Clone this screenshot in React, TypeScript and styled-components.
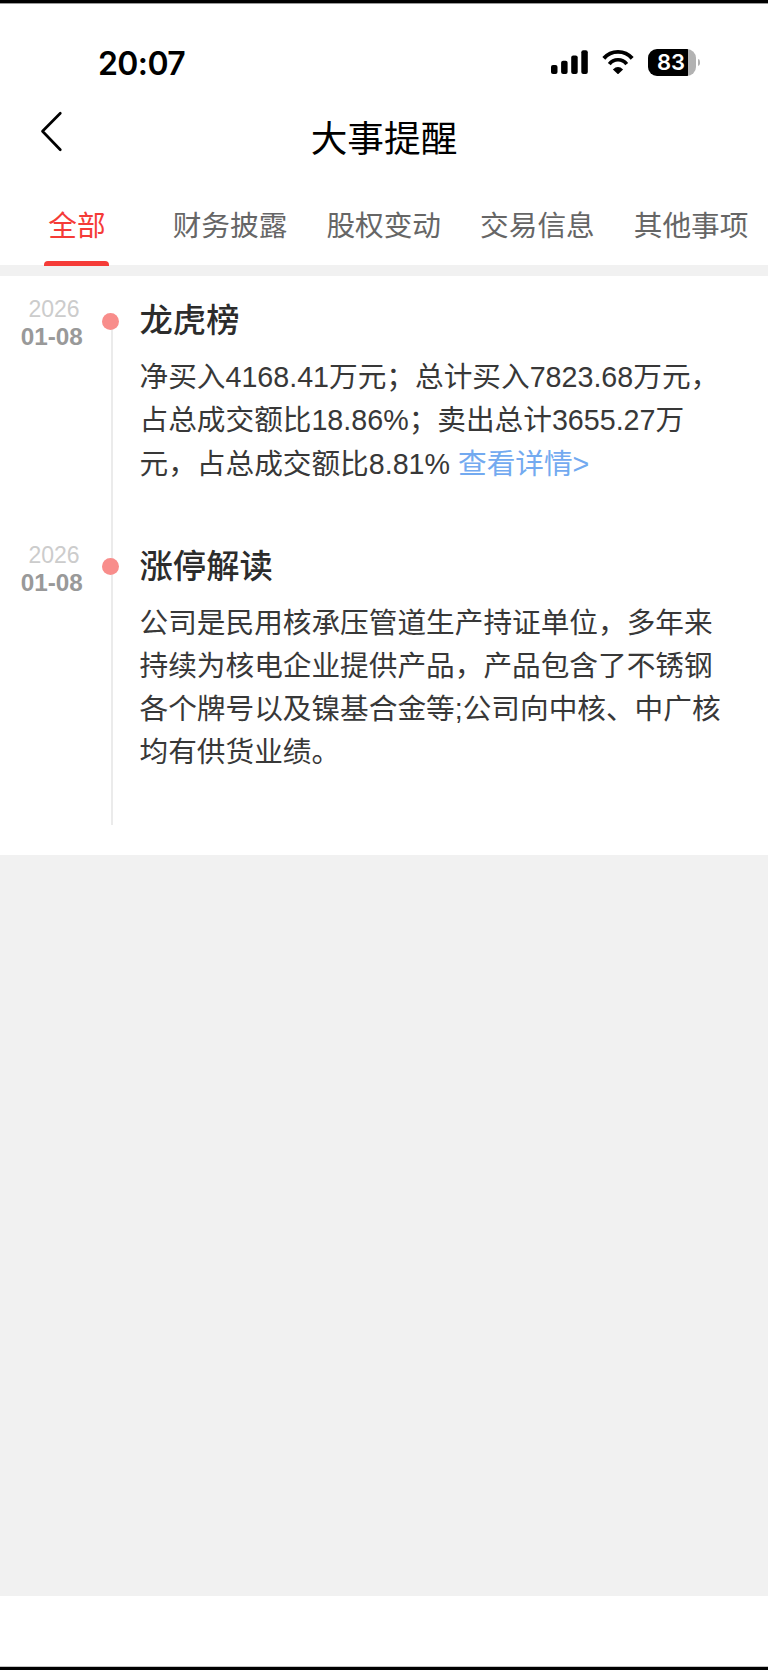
import React from "react";
import styled, { createGlobalStyle } from "styled-components";

const GlobalStyle = createGlobalStyle`
  * { box-sizing: border-box; }
  html, body { margin: 0; padding: 0; background: #fff; }
  body { font-family: "Liberation Sans", "Noto Sans CJK SC", sans-serif; }
  h1, h2, p { margin: 0; font-weight: 400; }
`;

const Screen = styled.div`
  width: 768px;
  height: 1670px;
  display: flex;
  flex-direction: column;
  background: #fff;
  border-top: 3px solid #000;
  border-bottom: 3px solid #000;
  box-shadow: inset 0 1px 0 #9a9a9a, inset 0 -1px 0 #c4c4c4;
  overflow: hidden;
`;

const StatusBar = styled.div`
  height: 93px;
  padding: 41px 68px 0 98px;
  display: flex;
  justify-content: space-between;
  align-items: flex-start;
`;

const Clock = styled.span`
  font: 600 32px/38px Inter, sans-serif;
  color: #000;
  letter-spacing: -0.6px;
  padding-top: 0.5px;
`;

const Indicators = styled.div`
  display: flex;
  align-items: flex-start;
  padding-top: 5px;
`;

const SignalIcon = styled.svg`
  width: 37px;
  height: 27px;
  margin-right: 14px;
`;

const WifiIcon = styled.svg`
  width: 32px;
  height: 27px;
  margin-right: 14px;
`;

const Battery = styled.div`
  display: flex;
  align-items: center;
  height: 27px;
`;

const BatteryBody = styled.div`
  width: 48px;
  height: 27px;
  border-radius: 9px;
  background: linear-gradient(to right, #000 39.7px, #b2b2b2 39.7px);
  color: #fff;
  font: 600 22px/27px Inter, sans-serif;
  padding-left: 9px;
  white-space: nowrap;
`;

const BatteryTip = styled.div`
  width: 2.5px;
  height: 7px;
  margin: 0 0 0 1.5px;
  border-radius: 0 3px 3px 0 / 0 4px 4px 0;
  background: #b2b2b2;
`;

const NavBar = styled.header`
  height: 92px;
  display: grid;
  grid-template-columns: 120px 1fr 120px;
  align-items: start;
`;

const BackButton = styled.button`
  border: 0;
  background: none;
  padding: 14px 0 0 39px;
  text-align: left;
  line-height: 0;
`;

const Title = styled.h1`
  text-align: center;
  font-size: 36.67px;
  line-height: 44px;
  padding-top: 22px;
  color: #000;
`;

const Tabs = styled.nav`
  height: 77px;
  flex: none;
  display: flex;
  padding-left: 44.7px;
`;

const Tab = styled.div<{ $active?: boolean }>`
  flex: none;
  display: flex;
  flex-direction: column;
  justify-content: space-between;
  align-items: center;
  width: ${(p) => (p.$active ? "64.6px" : "114.7px")};
  margin-right: ${(p) => (p.$active ? "63.4px" : "39px")};
  padding-top: 16.5px;
  font-size: 28.67px;
  line-height: 43px;
  white-space: nowrap;
  color: ${(p) => (p.$active ? "#f53b37" : "#666")};
`;

const TabUnderline = styled.span`
  position: relative;
  width: 65px;
  height: 5px;
  margin-bottom: -1px;
  border-radius: 4px 4px 0 0;
  background: #f53b37;
`;

const Divider = styled.div`
  height: 11px;
  flex: none;
  background: #f1f1f1;
`;

const Timeline = styled.main`
  height: 579px;
  flex: none;
  padding-top: 21px;
`;

const Event = styled.article<{ $height: number }>`
  display: grid;
  grid-template-columns: 102px 37.5px 1fr;
  height: ${(p) => p.$height}px;
`;

const EventDate = styled.div`
  display: flex;
  flex-direction: column;
  margin-top: -1px;
`;

const Year = styled.span`
  padding-left: 28.5px;
  font-size: 23px;
  line-height: 26px;
  color: #ccc;
`;

const Day = styled.span`
  padding-left: 20.7px;
  font-size: 24.3px;
  font-weight: 700;
  line-height: 29px;
  color: #999;
`;

const Rail = styled.div<{ $first?: boolean }>`
  background: linear-gradient(#ebebeb, #ebebeb) 9px ${(p) => (p.$first ? "24px" : "0")} / 2px 100% no-repeat;
  padding-top: 15.5px;
`;

const Dot = styled.div`
  width: 17px;
  height: 17px;
  border-radius: 50%;
  background: #f88d8b;
`;

const EventTitle = styled.h2`
  font-size: 33.33px;
  font-weight: 500;
  line-height: 40px;
  padding-top: 4px;
  color: #2c2c2c;
`;

const EventBody = styled.p`
  margin-top: 15px;
  font-size: 28.67px;
  line-height: 43px;
  color: #383838;
`;

const Line = styled.span<{ $shift?: boolean }>`
  display: block;
  white-space: nowrap;
  padding-top: ${(p) => (p.$shift ? "1px" : "0")};
`;

const DetailLink = styled.a`
  color: #73aaf0;
`;

const EmptyArea = styled.div`
  height: 741px;
  flex: none;
  background: #f1f1f1;
`;

const tabs = ["全部", "财务披露", "股权变动", "交易信息", "其他事项"];

const events = [
  {
    title: "龙虎榜",
    height: 245.7,
    lines: [
      "净买入4168.41万元；总计买入7823.68万元，",
      "占总成交额比18.86%；卖出总计3655.27万",
      "元，占总成交额比8.81% ",
    ],
    link: "查看详情>",
  },
  {
    title: "涨停解读",
    height: 282,
    lines: [
      "公司是民用核承压管道生产持证单位，多年来",
      "持续为核电企业提供产品，产品包含了不锈钢",
      "各个牌号以及镍基合金等;公司向中核、中广核",
      "均有供货业绩。",
    ],
  },
];

export default function App() {
  return (
    <Screen>
      <GlobalStyle />
      <StatusBar>
        <Clock>20:07</Clock>
        <Indicators>
          <SignalIcon viewBox="0 0 37 27">
            <rect x="0" y="16" width="6.5" height="9" rx="2" />
            <rect x="10.1" y="11.8" width="6.5" height="13.2" rx="2" />
            <rect x="20.2" y="6.4" width="6.5" height="18.6" rx="2" />
            <rect x="30.3" y="1.3" width="6.5" height="23.7" rx="2" />
          </SignalIcon>
          <WifiIcon viewBox="0 0 32 27">
            <g fill="none" stroke="#000">
              <path d="M1.8 9.4A18.8 18.8 0 0 1 30.2 9.4" strokeWidth="3.9" />
              <path d="M7.3 15.1A10.9 10.9 0 0 1 24.7 15.1" strokeWidth="3.7" />
            </g>
            <path d="M10.9 20.4Q16 15.8 21.1 20.4L16.6 24.8Q16 25.3 15.4 24.8Z" />
          </WifiIcon>
          <Battery>
            <BatteryBody>83</BatteryBody>
            <BatteryTip />
          </Battery>
        </Indicators>
      </StatusBar>
      <NavBar>
        <BackButton aria-label="返回">
          <svg width="26" height="42" viewBox="0 0 26 42" fill="none" stroke="#000" strokeWidth="2.7" strokeLinecap="round" strokeLinejoin="round">
            <path d="M21.3 3.3L3.5 21.3L21.3 39.7" />
          </svg>
        </BackButton>
        <Title>大事提醒</Title>
      </NavBar>
      <Tabs>
        {tabs.map((label, i) => (
          <Tab key={label} $active={i === 0}>
            {label}
            {i === 0 && <TabUnderline />}
          </Tab>
        ))}
      </Tabs>
      <Divider />
      <Timeline>
        {events.map((event, i) => (
          <Event key={event.title} $height={event.height}>
            <EventDate>
              <Year>2026</Year>
              <Day>01-08</Day>
            </EventDate>
            <Rail $first={i === 0}>
              <Dot />
            </Rail>
            <div>
              <EventTitle>{event.title}</EventTitle>
              <EventBody>
                {event.lines.map((line, n) => {
                  const linked = Boolean(event.link) && n === event.lines.length - 1;
                  return (
                    <Line key={line} $shift={linked}>
                      {line}
                      {linked && <DetailLink>{event.link}</DetailLink>}
                    </Line>
                  );
                })}
              </EventBody>
            </div>
          </Event>
        ))}
      </Timeline>
      <EmptyArea />
    </Screen>
  );
}
